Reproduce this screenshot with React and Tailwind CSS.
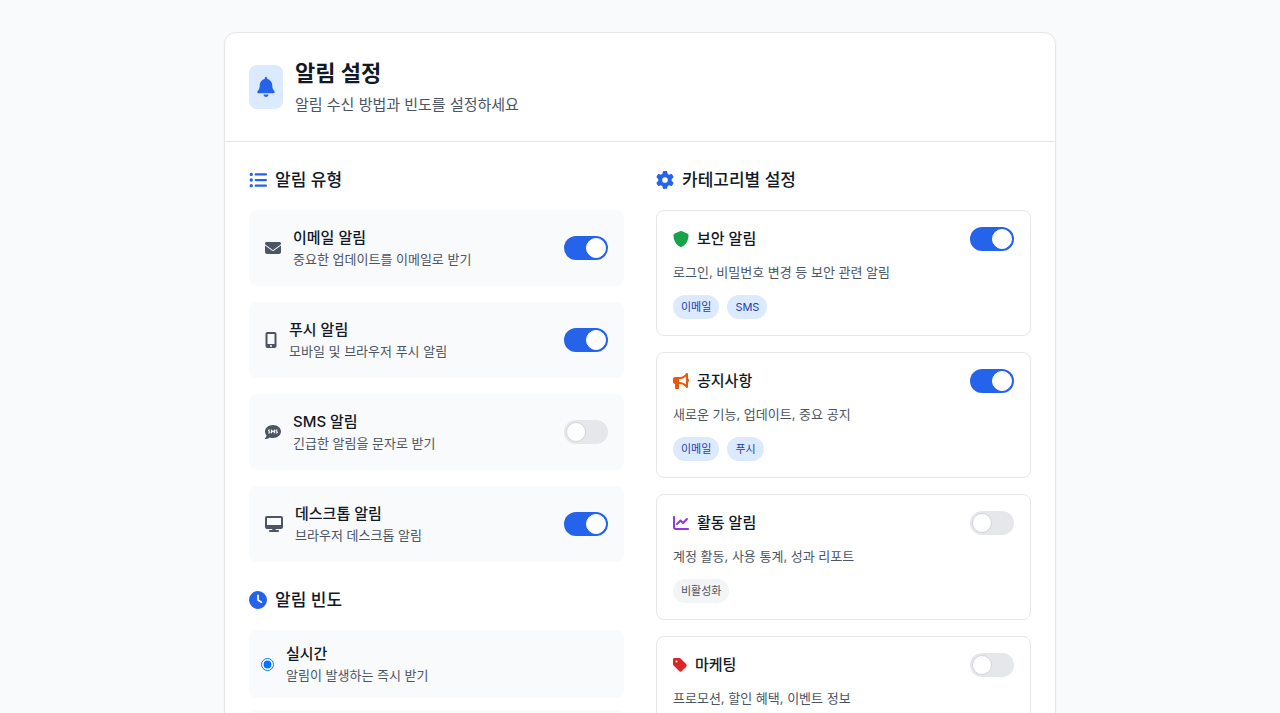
import React, { useState } from 'react';
import {
  FaBell,
  FaBullhorn,
  FaChartLine,
  FaClock,
  FaCommentSms,
  FaDesktop,
  FaEnvelope,
  FaGear,
  FaListUl,
  FaMobileScreenButton,
  FaShield,
  FaTag,
} from 'react-icons/fa6';

const TYPES = [
  { id: 'email', title: '이메일 알림', desc: '중요한 업데이트를 이메일로 받기', Icon: FaEnvelope, size: 'w-4 h-4' },
  { id: 'push', title: '푸시 알림', desc: '모바일 및 브라우저 푸시 알림', Icon: FaMobileScreenButton, size: 'w-3 h-4' },
  { id: 'sms', title: 'SMS 알림', desc: '긴급한 알림을 문자로 받기', Icon: FaCommentSms, size: 'w-4 h-4' },
  { id: 'desktop', title: '데스크톱 알림', desc: '브라우저 데스크톱 알림', Icon: FaDesktop, size: 'w-[18px] h-4' },
];

const FREQUENCIES = [
  { id: 'realtime', title: '실시간', desc: '알림이 발생하는 즉시 받기' },
  { id: 'daily', title: '일일 요약', desc: '하루에 한 번 요약해서 받기' },
];

const CATEGORIES = [
  { id: 'security', title: '보안 알림', desc: '로그인, 비밀번호 변경 등 보안 관련 알림', tags: ['이메일', 'SMS'], Icon: FaShield, look: 'w-4 h-4 text-[#16a34a]' },
  { id: 'notice', title: '공지사항', desc: '새로운 기능, 업데이트, 중요 공지', tags: ['이메일', '푸시'], Icon: FaBullhorn, look: 'w-4 h-4 text-[#ea580c]' },
  { id: 'activity', title: '활동 알림', desc: '계정 활동, 사용 통계, 성과 리포트', tags: [], Icon: FaChartLine, look: 'w-4 h-4 text-[#9333ea]' },
  { id: 'marketing', title: '마케팅', desc: '프로모션, 할인 혜택, 이벤트 정보', tags: [], Icon: FaTag, look: 'w-3.5 h-4 text-[#dc2626]' },
];

const Toggle = ({ id, checked, onChange }) => (
  <input
    id={id}
    type="checkbox"
    role="switch"
    checked={checked}
    onChange={onChange}
    className="flex h-6 w-11 shrink-0 cursor-pointer appearance-none items-center rounded-full bg-[#e5e7eb] p-0.5 transition-colors before:size-5 before:rounded-full before:border before:border-[#d1d5db] before:bg-white before:content-[''] checked:bg-[#2563eb] checked:before:translate-x-5 checked:before:border-white"
  />
);

const SectionTitle = ({ Icon, children }) => (
  <h2 className="mb-4 flex items-center gap-2 text-[17px] leading-7 font-medium">
    <Icon className="size-[18px] text-[#2563eb]" />
    {children}
  </h2>
);

const App = () => {
  const [enabled, setEnabled] = useState({
    email: true,
    push: true,
    sms: false,
    desktop: true,
    security: true,
    notice: true,
    activity: false,
    marketing: false,
  });
  const [frequency, setFrequency] = useState('realtime');

  const toggle = (id) => setEnabled((prev) => ({ ...prev, [id]: !prev[id] }));

  return (
    <div className="min-h-screen bg-[#f9fafb] px-8 py-8 font-[Inter,'Noto_Sans_CJK_KR',sans-serif] text-[#111827]">
      <main className="mx-auto max-w-[832px] rounded-xl border border-[#e5e7eb] bg-white shadow-xs">
        <header className="flex items-center gap-3 border-b border-[#e5e7eb] p-6">
          <div className="rounded-lg bg-[#dbeafe] px-2 py-3">
            <FaBell className="h-5 w-[18px] text-[#2563eb]" />
          </div>
          <div>
            <h1 className="text-[22px] leading-8 font-bold">알림 설정</h1>
            <p className="mt-1 text-[15px] leading-6 text-[#4b5563]">알림 수신 방법과 빈도를 설정하세요</p>
          </div>
        </header>

        <div className="grid grid-cols-1 gap-8 p-6 md:grid-cols-2">
          <div className="space-y-6">
            <section>
              <SectionTitle Icon={FaListUl}>알림 유형</SectionTitle>
              <div className="space-y-4">
                {TYPES.map(({ id, title, desc, Icon, size }) => (
                  <div key={id} className="flex items-center justify-between rounded-lg bg-[#f9fafb] p-4">
                    <div className="flex items-center gap-3">
                      <Icon className={`${size} text-[#4b5563]`} />
                      <div>
                        <label htmlFor={id} className="block text-[15px] leading-6 font-medium">{title}</label>
                        <p className="pb-0.5 text-[13px] leading-[18px] text-[#4b5563]">{desc}</p>
                      </div>
                    </div>
                    <Toggle id={id} checked={enabled[id]} onChange={() => toggle(id)} />
                  </div>
                ))}
              </div>
            </section>

            <section>
              <SectionTitle Icon={FaClock}>알림 빈도</SectionTitle>
              <div className="space-y-3">
                {FREQUENCIES.map(({ id, title, desc }) => (
                  <label key={id} className="flex cursor-pointer items-center gap-3 rounded-lg bg-[#f9fafb] p-3">
                    <input
                      type="radio"
                      name="frequency"
                      value={id}
                      checked={frequency === id}
                      onChange={() => setFrequency(id)}
                    />
                    <span>
                      <span className="block text-[15px] leading-6 font-medium">{title}</span>
                      <span className="block pb-0.5 text-[13px] leading-[18px] text-[#4b5563]">{desc}</span>
                    </span>
                  </label>
                ))}
              </div>
            </section>
          </div>

          <section>
            <SectionTitle Icon={FaGear}>카테고리별 설정</SectionTitle>
            <div className="space-y-4">
              {CATEGORIES.map(({ id, title, desc, tags, Icon, look }) => (
                <div key={id} className="rounded-lg border border-[#e5e7eb] p-4">
                  <div className="mb-3 flex items-center justify-between">
                    <div className="flex items-center gap-2">
                      <Icon className={look} />
                      <label htmlFor={id} className="text-[15px] leading-6 font-medium">{title}</label>
                    </div>
                    <Toggle id={id} checked={enabled[id]} onChange={() => toggle(id)} />
                  </div>
                  <p className="mb-3 pb-0.5 text-[13px] leading-[18px] text-[#4b5563]">{desc}</p>
                  <div className="flex gap-2">
                    {tags.map((tag) => (
                      <span key={tag} className="rounded-full bg-[#dbeafe] px-2 py-1 text-[11px] leading-4 text-[#1e40af]">{tag}</span>
                    ))}
                    {tags.length === 0 && (
                      <span className="rounded-full bg-[#f3f4f6] px-2 py-1 text-[11px] leading-4 text-[#4b5563]">비활성화</span>
                    )}
                  </div>
                </div>
              ))}
            </div>
          </section>
        </div>
      </main>
    </div>
  );
};

export default App;
